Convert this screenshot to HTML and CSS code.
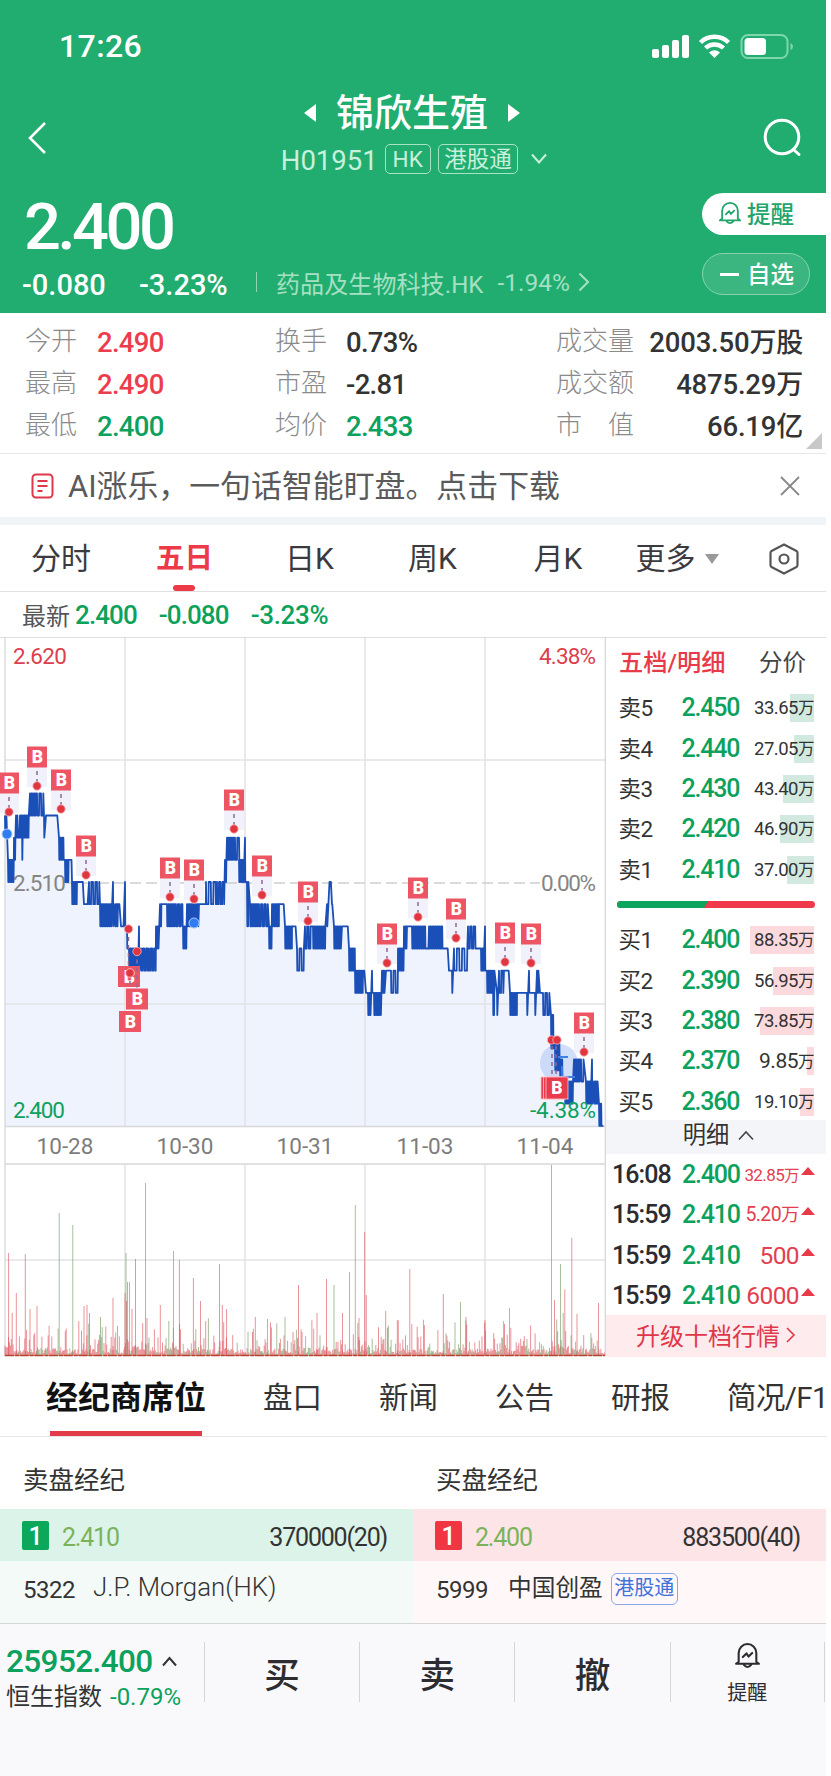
FILE: index.html
```html
<!DOCTYPE html>
<html lang="zh-CN">
<head>
    <meta charset="UTF-8">
    <meta name="viewport" content="width=device-width, initial-scale=1.0">
    <title>锦欣生殖 H01951</title>
    <link rel="stylesheet" href="styles.css">
</head>
<body>
    <svg width="0" height="0" class="defs">
        <symbol id="bell" viewBox="0 0 26 26">
            <path d="M4.500 19V10.500a8.500 8.500 0 0 1 17 0V19l2.500 2H2zM9.500 22q3.500 4 7 0M8.500 14.500l3.500-3.500 2 3 3.500-3.500" fill="none" stroke="currentColor" stroke-width="2" stroke-linejoin="round" stroke-linecap="round"/>
        </symbol>
    </svg>

    <header class="header">
        <div class="status-bar">
            <span class="clock">17:26</span>
            <svg width="144" height="26" viewBox="0 0 144 26" fill="#fff">
                <rect x="1" y="16" width="7" height="9" rx="2"/>
                <rect x="11" y="12" width="7" height="13" rx="2"/>
                <rect x="21" y="7" width="7" height="18" rx="2"/>
                <rect x="31" y="2" width="7" height="23" rx="2"/>
                <path d="M49.500 9.500a20 20 0 0 1 28 0M54.500 15a13 13 0 0 1 18 0" fill="none" stroke="#fff" stroke-width="4.500"/>
                <path d="M58 19.500q5.500-4.500 11 0L63.500 25z"/>
                <rect x="90.500" y="2" width="46" height="23" rx="6.500" fill="none" stroke="#7fd6ad" stroke-width="2"/>
                <rect x="93.500" y="5" width="21.500" height="17" rx="3.500"/>
                <path d="M139.500 10v7q2.500-1 2.500-3.500t-2.500-3.500z" fill="#7fd6ad"/>
            </svg>
        </div>

        <div class="title-bar">
            <svg class="back" width="20" height="34" viewBox="0 0 20 34"><path d="M18 2L3 17l15 15" fill="none" stroke="#fff" stroke-width="2.600"/></svg>
            <div class="title">
                <div class="title-name">
                    <svg width="12" height="18"><path d="M12 0v18L0 9z" fill="#fff"/></svg>
                    <h1>锦欣生殖</h1>
                    <svg width="12" height="18"><path d="M0 0v18l12-9z" fill="#fff"/></svg>
                </div>
                <div class="title-code">
                    <span class="code">H01951</span>
                    <span class="tag">HK</span>
                    <span class="tag">港股通</span>
                    <svg width="16" height="12"><path d="M1 1.500l7 8 7-8" fill="none" stroke="#c9f0dc" stroke-width="2"/></svg>
                </div>
            </div>
            <svg class="search" width="40" height="42" viewBox="0 0 40 42" fill="none" stroke="#fff" stroke-width="3" stroke-linecap="round"><circle cx="19" cy="19" r="16.800"/><path d="M30.500 31.500l5.500 5"/></svg>
        </div>

        <div class="quote">
            <div class="quote-left">
                <div class="price">2.400</div>
                <div class="change">
                    <span class="diff">-0.080</span>
                    <span class="pct">-3.23%</span>
                    <i class="sep"></i>
                    <span class="sector">药品及生物科技.HK</span>
                    <span class="sector-pct">-1.94%</span>
                    <svg width="12" height="20"><path d="M1.500 1.500l8.500 8.500-8.500 8.500" fill="none" stroke="#a5e0c3" stroke-width="2"/></svg>
                </div>
            </div>
            <div class="quote-actions">
                <button class="btn-remind"><svg width="24" height="24"><use href="#bell"/></svg>提醒</button>
                <button class="btn-watch"><i class="minus"></i>自选</button>
            </div>
        </div>
    </header>

    <section class="stats">
        <span class="label">今开</span><span class="value red">2.490</span>
        <span class="label">换手</span><span class="value">0.73%</span>
        <span class="label">成交量</span><span class="value right">2003.50<b>万股</b></span>
        <span class="label">最高</span><span class="value red">2.490</span>
        <span class="label">市盈</span><span class="value">-2.81</span>
        <span class="label">成交额</span><span class="value right">4875.29<b>万</b></span>
        <span class="label">最低</span><span class="value green">2.400</span>
        <span class="label">均价</span><span class="value green">2.433</span>
        <span class="label spread"><span>市</span><span>值</span></span><span class="value right">66.19<b>亿</b></span>
        <i class="corner"></i>
    </section>

    <section class="notice">
        <svg width="23" height="26" viewBox="0 0 23 26" fill="none" stroke="#e0384a" stroke-width="2"><rect x="1.500" y="1.500" width="20" height="23" rx="3.500"/><path d="M6.500 8h10M6.500 13h10M6.500 18h5"/></svg>
        <p>AI涨乐，一句话智能盯盘。点击下载</p>
        <svg width="20" height="20"><path d="M1 1l18 18M19 1L1 19" stroke="#888" stroke-width="1.800"/></svg>
    </section>

    <nav class="periods">
        <a>分时</a>
        <a class="active">五日</a>
        <a>日K</a>
        <a>周K</a>
        <a>月K</a>
        <a>更多<i class="caret"></i></a>
        <svg width="32" height="34" viewBox="0 0 32 34" fill="none" stroke="#555" stroke-width="2.200"><path d="M16 2.500l12.500 6.500q1 .5 1 2v12q0 1.500-1 2L16 31.500 3.500 25q-1-.5-1-2V11q0-1.500 1-2z"/><circle cx="16" cy="17" r="4.500"/></svg>
    </nav>

    <div class="latest">
        <span class="latest-label">最新</span><span>2.400</span><span>-0.080</span><span>-3.23%</span>
    </div>

    <main class="market">
        <svg class="chart" width="606" height="720" viewBox="0 637 606 720">
            <path id="area" fill="#eef3fd"/>
            <g fill="none" stroke="#e3e4e7" stroke-width="1.500">
                <path d="M125 638v488M245 638v488M365 638v488M485 638v488M5 760h600M5 1004h600"/>
                <path d="M125 1164v192M245 1164v192M365 1164v192M485 1164v192M5 1260h600"/>
            </g>
            <path d="M66 883H540" stroke="#cfcfcf" stroke-width="1.500" stroke-dasharray="11 5"/>
            <path d="M5 1126.500h600M5 1164h600M5 637v719M605.300 637v719" stroke="#d6d8db" stroke-width="1.300"/>
            <g class="axis">
                <text x="13" y="664" textLength="54" class="red">2.620</text>
                <text x="596" y="664" text-anchor="end" textLength="57" class="red">4.38%</text>
                <text x="13" y="891" textLength="53">2.510</text>
                <text x="596" y="891" text-anchor="end" textLength="55">0.00%</text>
            </g>
            <circle cx="559" cy="1063" r="19" fill="#b9cdf6" fill-opacity=".65"/>
            <path id="line" fill="none" stroke="#1a4fb8" stroke-width="1.800" stroke-linejoin="round"/>
            <path d="M558 1057h10M562 1066v11h13" fill="none" stroke="#3f7fe8" stroke-width="1.800"/>
            <g class="axis">
                <text x="13" y="1118" textLength="52" class="green">2.400</text>
                <text x="596" y="1118" text-anchor="end" textLength="66" class="green">-4.38%</text>
            </g>
            <g fill="#2f7df0" stroke="#a7c8fb"><circle cx="7" cy="834" r="5"/><circle cx="194" cy="923" r="5"/></g>
            <g id="markers"></g>
            <g class="dates">
                <text x="65" y="1154">10-28</text>
                <text x="185" y="1154">10-30</text>
                <text x="305" y="1154">10-31</text>
                <text x="425" y="1154">11-03</text>
                <text x="545" y="1154">11-04</text>
            </g>
            <g id="volume"></g>
        </svg>

        <aside class="book">
            <div class="book-tabs"><b>五档/明细</b><span>分价</span></div>
            <div class="levels" id="sells"></div>
            <svg class="ratio" width="198" height="7"><rect width="198" height="7" rx="3.500" fill="#f0394a"/><path d="M3.500 0H91l-4 7H3.500a3.500 3.500 0 0 1 0-7z" fill="#0da55d"/></svg>
            <div class="levels" id="buys"></div>
            <div class="detail-bar">明细<svg width="16" height="11"><path d="M1 9.500L8 2l7 7.500" fill="none" stroke="#444" stroke-width="1.600"/></svg></div>
            <div class="ticks">
                <div class="tick"><span>16:08</span><span class="green">2.400</span><span class="s">32.85<b>万</b></span><i></i></div>
                <div class="tick"><span>15:59</span><span class="green">2.410</span><span class="m">5.20<b>万</b></span><i></i></div>
                <div class="tick"><span>15:59</span><span class="green">2.410</span><span class="l">500</span><i></i></div>
                <div class="tick"><span>15:59</span><span class="green">2.410</span><span class="l">6000</span><i></i></div>
            </div>
            <div class="upgrade">升级十档行情<svg width="10" height="18"><path d="M1 2l7 7-7 7" fill="none" stroke="#e0384a" stroke-width="1.600"/></svg></div>
        </aside>
    </main>

    <nav class="sections">
        <a class="active">经纪商席位</a>
        <a>盘口</a>
        <a>新闻</a>
        <a>公告</a>
        <a>研报</a>
        <a>简况/F1</a>
    </nav>

    <section class="brokers">
        <div class="broker sell">
            <h2>卖盘经纪</h2>
            <div class="broker-head"><em>1</em><span class="broker-price">2.410</span><span>370000(20)</span></div>
            <div class="broker-row"><span class="num">5322</span><span class="name latin">J.P. Morgan(HK)</span></div>
        </div>
        <div class="broker buy">
            <h2>买盘经纪</h2>
            <div class="broker-head"><em>1</em><span class="broker-price">2.400</span><span>883500(40)</span></div>
            <div class="broker-row"><span class="num">5999</span><span class="name">中国创盈</span><span class="tag-blue">港股通</span></div>
        </div>
    </section>

    <footer class="toolbar">
        <div class="index">
            <div class="index-value">25952.400<svg width="15" height="11"><path d="M1 9.500L7.500 2 14 9.500" fill="none" stroke="#333" stroke-width="2"/></svg></div>
            <div class="index-name">恒生指数<span>-0.79%</span></div>
        </div>
        <button>买</button>
        <button>卖</button>
        <button>撤</button>
        <button class="remind"><svg width="27" height="27"><use href="#bell"/></svg>提醒</button>
    </footer>

    <script>
        const TOP = 882, STEP = 22.17, BOTTOM = 1126;

        // price runs: x from, x to, high level, low level, optional zigzag step.
        // a level is one 0.01 tick below 2.510
        const runs = [
            [5, 7, -3, -2], [8, 14, -1, 0], [14, 16, -2, -1], [16, 18, -3, -2], [18, 20, -2, -2],
            [20, 22, -3, -2], [22, 23, -3, -1], [23, 29, -3, -2], [30, 36, -4, -3], [37, 43, -4, -3, 2], [44, 45, -3, -2],
            [46, 58, -3, -3], [59, 64, -2, -1], [65, 69, -1, 0], [69, 72, -1, -1], [72, 77, 0, 1],
            [77, 83, 0, 0], [84, 88, 1, 1], [89, 99, 0, 1, 2], [100, 112, 1, 2], [113, 114, 0, 2], [115, 118, 1, 2],
            [118, 120, 1, 1], [121, 124, 2, 2], [125, 126, 0, 2], [127, 128, 2, 3], [129, 138, 3, 4], [139, 140, 2, 4],
            [141, 148, 3, 4, 1.6], [149, 156, 3, 4, 1.6], [156, 159, 2, 3], [160, 162, 1, 2], [162, 167, 1, 1],
            [167, 175, 1, 2], [176, 183, 1, 2, 1.6], [183, 187, 2, 3], [187, 199, 1, 2], [199, 206, 1, 1],
            [206, 216, 0, 1, 2.4], [217, 225, 0, 1, 1.7], [225, 227, -1, 0], [227, 234, -2, -1], [235, 239, -2, -1, 2],
            [239, 244, -1, 0], [245, 246, -2, 0], [247, 249, 0, 2], [250, 258, 1, 2], [259, 268, 1, 2, 1.7], [269, 272, 2, 3],
            [272, 279, 1, 2], [279, 284, 1, 1], [285, 292, 2, 3], [292, 296, 2, 2], [297, 304, 3, 4, 2.2], [305, 312, 2, 3, 1.8],
            [313, 326, 2, 3], [327, 328, 1, 2], [329.5, 331, 0, 0], [332, 333, 1, 1], [334, 341, 2, 3], [342, 348, 2, 2],
            [349, 355, 3, 4], [355, 363, 4, 5], [364, 365, 4, 4], [366, 368, 5, 5], [368, 371, 5, 6], [372, 373, 4, 5],
            [374, 381, 5, 6], [382, 385, 4, 5], [386, 390, 4, 4], [391, 398, 4, 5, 2.2], [398, 404, 3, 4], [404, 407, 2, 3],
            [407, 412, 2, 2], [412, 426, 2, 3], [427, 429, 3, 3], [429, 443, 2, 3], [443, 448, 3, 3], [449, 451, 4, 4],
            [452, 453, 4, 5], [454, 468, 3, 4, 2.6], [468, 476, 2, 3, 1.8], [477, 481, 3, 3], [481, 484, 3, 4], [485, 486, 2, 4],
            [487, 493, 4, 5], [493, 495, 4, 6], [497, 498, 5, 6], [499, 503, 4, 5, 2], [504, 509, 4, 4], [510, 517, 5, 6],
            [517, 526, 5, 5], [527, 528, 5, 6], [529, 530, 4, 5], [531, 534, 5, 5], [535, 536, 5, 6], [537, 539, 4, 5],
            [540, 543, 5, 5], [543, 550, 5, 6, 2], [551, 554, 6, 7.5], [555, 560, 7.3, 8.5], [560, 563, 8, 9],
            [565, 573, 9, 10], [574, 580, 8, 9], [581, 585, 8, 9, 2.2], [586, 591, 9, 10], [592, 593, 8, 10],
            [594, 598, 9, 10], [599, 602, 10, 11], [602, 604, 11, 11]
        ];
        const level = k => (TOP + k * STEP).toFixed(1);
        const points = [];
        runs.forEach(([from, to, hi, lo, step = 1.1]) => {
            let up = true;
            for (let x = from; x <= to; x += step) {
                points.push(x.toFixed(1) + ' ' + level(up ? hi : lo));
                points.push((x + 0.3).toFixed(1) + ' ' + level(up ? lo : hi));
                up = !up;
            }
        });
        document.getElementById('line').setAttribute('d', 'M' + points.join('L'));
        document.getElementById('area').setAttribute('d', 'M' + points.join('L') + 'V' + BOTTOM + 'H5Z');

        // buy markers, placed above their dots
        const above = [[9, 812], [37, 786], [61, 809], [86, 875], [170, 897], [194, 899], [234, 829], [262, 895], [308, 921],
            [387, 963], [418, 917], [456, 938], [505, 962], [531, 963], [584, 1052]];
        const dot = (x, y) => `<circle cx="${x}" cy="${y}" r="4.2" fill="#e0363f" stroke="#f9b8bf" stroke-width=".8"/>`;
        const box = (x, y, w = 20) => `<rect x="${x}" y="${y}" width="${w}" height="21" fill="#ee5564"/><text class="b" x="${x + w / 2 + .5}" y="${y + 16.500}">B</text>`;
        const dash = (x, y1, y2) => `<path d="M${x} ${y1}V${y2}" stroke="#8d6a96" stroke-width="1.5" stroke-dasharray="4 4"/>`;
        let marks = '';
        above.forEach(([x, y]) => {
            marks += `<rect x="${x - 10}" y="${y - 19}" width="20" height="20" fill="#f1f1fc"/>` +
                dash(x, y - 15, y - 3) + dot(x, y) + box(x - 10, y - 39.5);
        });
        // clusters hanging below the line
        [[128.5, 929, 118, 966], [130, 973, 119, 1011], [137, 951.5, 126, 988.5]].forEach(([x, y, bx, by]) => {
            marks += dash(x, y, by) + box(bx, by, 22) + dot(x, y);
        });
        marks += dot(130, 973);
        marks += dash(552, 1046, 1077) + dash(556, 1046, 1077);
        [541, 543.5, 546].forEach(x => { marks += `<rect x="${x}" y="1077" width="22" height="22" fill="#e83b4c" stroke="#fac5ca" stroke-width=".8"/>`; });
        marks += `<text class="b" x="557" y="1094">B</text>` + dot(551.5, 1040) + dot(557, 1040);
        document.getElementById('markers').innerHTML = marks;

        // volume bars: tall ones are listed, the floor is a seeded fill
        const tall = [[8.6, 103, 'r'], [16.3, 63, 'r'], [25.3, 102, 'r'], [30, 47, 'r'], [37, 50, 'r'], [59.2, 143, 'g'], [72.8, 131, 'g'],
            [84, 50, 'r'], [87, 51, 'r'], [89.5, 43, 'r'], [100.5, 39, 'g'], [113, 58, 'r'], [125, 63, 'r'], [126, 103, 'g'], [127.5, 74, 'g'],
            [129.5, 74, 'g'], [132, 47, 'r'], [135.5, 97, 'r'], [145.5, 173, 'g'], [147, 38, 'r'], [160.3, 51, 'r'], [173.5, 105, 'g'],
            [179.4, 96, 'r'], [193.4, 78, 'r'], [200.5, 55, 'r'], [219.5, 92, 'r'], [222.3, 51, 'r'], [226.6, 47, 'r'], [255.3, 39, 'r'],
            [267.5, 37, 'g'], [285, 39, 'g'], [298.5, 71, 'r'], [317, 43, 'r'], [326.5, 77, 'r'], [334, 71, 'g'], [342.5, 43, 'r'],
            [349.5, 84, 'g'], [355.3, 151, 'g'], [359, 38, 'r'], [364.7, 124, 'r'], [366.3, 61, 'r'], [385.7, 45, 'r'], [397.3, 36, 'r'],
            [409.8, 87, 'r'], [443.3, 62, 'r'], [460.5, 54, 'g'], [466, 39, 'r'], [485, 36, 'r'], [509.5, 48, 'g'], [551.5, 191, 'g'],
            [554.5, 56, 'r'], [560.5, 92, 'g'], [563.2, 43, 'g'], [571.8, 118, 'r'], [577, 42, 'r'], [598.5, 53, 'r']];
        const color = { r: '#dc4a54', g: '#6b9458' };
        const bar = (x, h, c, o) => `<path d="M${x} 1356v-${h}" stroke="${color[c]}" stroke-opacity="${o}" stroke-width=".8"/>`;
        let seed = 7;
        const rnd = () => (seed = (seed * 16807) % 2147483647) / 2147483647;
        let bars = '';
        for (let x = 5; x < 605; x += 0.9) {
            const busy = (x < 16 || (x > 124 && x < 140) || (x > 550 && x < 566)) ? 1.8 : 1;
            const h = 2 + Math.pow(rnd(), 7) * 34 * busy + rnd() * 5 * busy;
            bars += bar(x.toFixed(1), h.toFixed(1), rnd() > 0.27 ? 'r' : 'g', 0.75);
        }
        tall.forEach(([x, h, c]) => { bars += bar(x, h, c, 0.75); });
        bars += '<path d="M5 1355.5h600" stroke="#b5442f" stroke-width="1.6" stroke-dasharray="9 1 4 .7"/>';
        document.getElementById('volume').innerHTML = bars;

        // order book
        const sells = [['卖5', '2.450', 33.65], ['卖4', '2.440', 27.05], ['卖3', '2.430', 43.40], ['卖2', '2.420', 46.90], ['卖1', '2.410', 37.00]];
        const buys = [['买1', '2.400', 88.35], ['买2', '2.390', 56.95], ['买3', '2.380', 73.85], ['买4', '2.370', 9.85], ['买5', '2.360', 19.10]];
        const rows = list => list.map(([name, price, vol]) =>
            `<div class="level"><span>${name}</span><span class="green">${price}</span>` +
            `<span class="vol${vol < 10 ? ' big' : ''}"><i style="width:${(vol * 0.725).toFixed(0)}px"></i><em>${vol.toFixed(2)}<b>万</b></em></span></div>`).join('');
        document.getElementById('sells').innerHTML = rows(sells);
        document.getElementById('buys').innerHTML = rows(buys);
    </script>
</body>
</html>
```
FILE: styles.css
```css
* {
    box-sizing: border-box;
}

html {
    background: #fff;
}

body {
    margin: 0;
    width: 826px;
    height: 1776px;
    overflow: hidden;
    background: #fff;
    color: #333;
    font-family: Roboto, "Noto Sans CJK SC", sans-serif;
    display: flex;
    flex-direction: column;
}

body > * {
    flex-shrink: 0;
}

svg {
    display: block;
    flex-shrink: 0;
}

.defs {
    height: 0;
    flex: none;
}

i, em {
    font-style: normal;
}

button {
    border: none;
    background: none;
    padding: 0;
    font-family: inherit;
}

.red {
    color: #ec3d4e;
    fill: #dc3f4e;
}

.green {
    color: #0ca15c;
    fill: #0fa15e;
}

/* header */
.header {
    height: 313px;
    background: #21ad70;
    color: #fff;
}

.status-bar {
    height: 92px;
    padding: 0 31px 0 59px;
    display: flex;
    justify-content: space-between;
    align-items: center;
}

.clock {
    font-size: 32px;
    font-weight: 500;
    letter-spacing: 0.4px;
}

.title-bar {
    height: 92px;
    padding: 0 23px 0 27px;
    display: flex;
    justify-content: space-between;
    align-items: flex-start;
}

.back {
    margin-top: 29px;
}

.search {
    margin-top: 26px;
}

.title {
    padding-left: 18px;
}

.title-name {
    display: flex;
    justify-content: center;
    align-items: center;
    gap: 20px;
    height: 42px;
    margin-right: 4px;
}

.title-name h1 {
    margin: 0;
    font-size: 38px;
    line-height: 42px;
    font-weight: 500;
}

.title-code {
    height: 30px;
    margin-top: 10px;
    display: flex;
    align-items: center;
    gap: 7px;
    color: #c9f0dc;
}

.code {
    font-size: 27.5px;
    line-height: 30px;
    padding-top: 3px;
}

.tag {
    height: 30px;
    padding: 0 5.5px;
    min-width: 46px;
    border: 1.5px solid #a9e3c6;
    border-radius: 5px;
    font-size: 22.5px;
    line-height: 28px;
    text-align: center;
}

.title-code svg {
    margin-left: 6px;
}

.quote {
    display: flex;
    justify-content: space-between;
    height: 129px;
}

.quote-left {
    padding-left: 24px;
}

.price {
    font-size: 65px;
    line-height: 64px;
    font-weight: 500;
    font-stretch: 88%;
    letter-spacing: -3.5px;
    padding-top: 11px;
}

.change {
    display: flex;
    align-items: center;
    height: 34px;
    margin-top: 6px;
    margin-left: -2px;
    font-size: 29px;
    font-weight: 500;
    white-space: nowrap;
}

.diff {
    width: 117px;
}

.pct {
    width: 117px;
}

.diff, .pct {
    padding-top: 5px;
}

.sep {
    width: 1px;
    height: 20px;
    margin-right: 19px;
    background: #8fd6b4;
}

.sector, .sector-pct {
    color: #a5e0c3;
    font-size: 24px;
    font-weight: 400;
}

.sector {
    letter-spacing: 0.1px;
}

.sector-pct {
    font-size: 24.5px;
    margin: 1px 8px 0 14px;
}

.quote-actions {
    padding-top: 9px;
    width: 124px;
}

.btn-remind, .btn-watch {
    display: flex;
    align-items: center;
    height: 42px;
    padding-bottom: 2px;
    font-size: 23.5px;
    font-weight: 500;
}

.btn-remind {
    width: 124px;
    padding-left: 16px;
    gap: 5px;
    border-radius: 21px 0 0 21px;
    background: #fff;
    color: #21a56c;
}

.btn-watch {
    width: 108px;
    margin-top: 18px;
    padding-left: 17px;
    gap: 8px;
    border: 1.5px solid #85d3ae;
    border-radius: 21px;
    background: #3bb680;
    color: #fff;
}

.minus {
    width: 19px;
    height: 3px;
    margin-top: 2px;
    background: #fff;
}

/* key numbers */
.stats {
    position: relative;
    height: 141px;
    padding: 8px 23px 0 25px;
    border-bottom: 1px solid #e6e7e9;
    display: grid;
    grid-template-columns: 72px 178px 71px 210px 78px 1fr;
    grid-auto-rows: 42px;
    white-space: nowrap;
}

.label {
    font-size: 26px;
    line-height: 40px;
    color: #8a8a8a;
    font-weight: 300;
}

.spread {
    display: flex;
    justify-content: space-between;
}

.value {
    font-size: 27.5px;
    line-height: 43px;
    font-weight: 500;
    letter-spacing: -0.7px;
}

.right {
    text-align: right;
    letter-spacing: -0.2px;
}

.value b {
    font-size: 27px;
    font-weight: 500;
}

.corner {
    position: absolute;
    right: 4px;
    bottom: 4px;
    border-left: 16px solid transparent;
    border-bottom: 16px solid #c8c8c8;
}

.notice {
    height: 63px;
    padding: 0 26px 0 31px;
    display: flex;
    align-items: center;
}

.notice p {
    flex: 1;
    margin: 2px 0 0 14px;
    font-size: 30.9px;
    line-height: 40px;
    color: #5a5a5a;
}

/* chart tabs */
.periods {
    height: 75px;
    border-top: 8px solid #f0f4f6;
    border-bottom: 1px solid #dfe1e3;
    padding: 1px 26px 0 31px;
    display: grid;
    grid-template-columns: 125px 129px 123px 125.5px 102px 1fr 32px;
    align-items: center;
    font-size: 30px;
    color: #3b3b3f;
}

.periods a {
    position: relative;
    line-height: 65px;
    display: flex;
    align-items: center;
}

.periods .active {
    color: #ec3a49;
    font-weight: 700;
    font-size: 28.5px;
}

.periods .active::after {
    content: "";
    position: absolute;
    left: 17px;
    bottom: 0;
    width: 22px;
    height: 6px;
    border-radius: 3px;
    background: #ec3a49;
}

.caret {
    margin-left: 9px;
    border: 7.5px solid transparent;
    border-top: 10px solid #999;
    border-bottom: 0;
}

.latest {
    height: 45px;
    padding-left: 22px;
    display: flex;
    align-items: center;
    font-size: 26px;
    font-weight: 500;
    letter-spacing: -0.9px;
    color: #0ca15c;
}

.latest span + span {
    margin-right: 22px;
}

.latest span:last-child {
    letter-spacing: -0.3px;
}

.latest .latest-label {
    margin-right: 5px;
    font-size: 24px;
    font-weight: 400;
    color: #555;
    letter-spacing: 0;
}

/* chart and order book */
.market {
    display: flex;
    height: 720px;
    border-top: 1px solid #dcdee0;
}

.axis text {
    font-size: 22.5px;
}

.axis text:not([class]) {
    fill: #858585;
}

.dates text {
    font-size: 22.5px;
    fill: #7d7d7d;
    text-anchor: middle;
}

.b {
    font-size: 17.5px;
    font-weight: 900;
    fill: #fff;
    text-anchor: middle;
}

.chart {
    margin-top: -1px;
}

.book {
    width: 220px;
    font-size: 25px;
}

.book-tabs {
    height: 50px;
    padding: 0 20px 5px 13px;
    display: flex;
    align-items: center;
    justify-content: space-between;
    font-size: 23.5px;
    color: #444;
}

.book-tabs b {
    color: #e83b4a;
    font-weight: 500;
    font-size: 24.3px;
}

.level {
    height: 40.4px;
    padding: 0 12px 0 12.5px;
    display: grid;
    grid-template-columns: 63px 60px 1fr;
    align-items: center;
    line-height: 40px;
    font-size: 22.5px;
    letter-spacing: -0.5px;
}

.level .green, .tick .green {
    font-size: 25px;
    font-weight: 500;
    letter-spacing: -1.2px;
    white-space: nowrap;
}

.vol {
    position: relative;
    height: 28px;
    display: flex;
    justify-content: flex-end;
    font-size: 18.5px;
    line-height: 29px;
}

.vol i {
    height: 28px;
    background: #d1e9de;
}

#buys .vol i {
    background: #fcd9dc;
}

.vol em {
    position: absolute;
    right: 0;
}

.vol b, .tick b {
    font-weight: 400;
    font-size: 16.5px;
}

.big {
    font-size: 21px;
}

.ratio {
    margin: 11px 0 12px 11px;
}

.detail-bar {
    height: 34px;
    margin-top: -2px;
    padding-left: 5px;
    display: flex;
    align-items: center;
    justify-content: center;
    gap: 9px;
    background: #f3f5f9;
    font-size: 23.3px;
    line-height: 30px;
    padding-bottom: 3px;
}

.ticks {
    height: 161px;
}

.tick {
    height: 40.4px;
    padding: 0 11px 0 6px;
    display: grid;
    grid-template-columns: 70px 57px 1fr 16px;
    line-height: 42px;
    font-weight: 500;
    letter-spacing: -0.9px;
    white-space: nowrap;
    color: #2c2c30;
}

.tick .s, .tick .m, .tick .l {
    color: #e2404f;
    text-align: right;
    font-weight: 400;
    font-size: 17px;
    letter-spacing: -0.6px;
}

.tick .s b {
    font-size: 15.5px;
}

.tick .m {
    font-size: 19.5px;
}

.tick .m b {
    font-size: 18.5px;
}

.tick .l {
    font-size: 24.5px;
}

.tick i {
    align-self: start;
    justify-self: end;
    margin-top: 13px;
    border: 7px solid transparent;
    border-bottom: 8px solid #e83a49;
    border-top: 0;
}

.upgrade {
    height: 42px;
    padding-bottom: 2px;
    display: flex;
    align-items: center;
    justify-content: center;
    gap: 6px;
    background: #feebed;
    color: #e0384a;
    font-size: 24px;
}

/* lower tabs */
.sections {
    height: 80px;
    padding-left: 46px;
    border-bottom: 1px solid #e4e6e8;
    display: flex;
    overflow: hidden;
    white-space: nowrap;
    font-size: 29.5px;
    line-height: 82px;
    color: #333;
}

.sections a {
    width: 116px;
    flex-shrink: 0;
}

.sections a:last-child {
    width: auto;
    letter-spacing: -0.6px;
}

.sections .active {
    position: relative;
    width: 217px;
    font-size: 32px;
    font-weight: 700;
    color: #111;
}

.sections .active::after {
    content: "";
    position: absolute;
    left: 4px;
    bottom: 0;
    width: 152px;
    height: 5px;
    background: #e33c49;
}

.brokers {
    height: 187px;
    display: flex;
    border-bottom: 1px solid #d4d6da;
}

.broker {
    flex: 1;
}

.broker h2 {
    margin: 0;
    padding: 7px 0 0 23px;
    height: 72px;
    line-height: 72px;
    font-size: 25.5px;
    font-weight: 400;
}

.broker-head {
    height: 52px;
    padding: 4px 26px 0 22px;
    display: flex;
    align-items: center;
    background: #dcf3e9;
    font-size: 25px;
}

.buy .broker-head {
    background: #fde5e7;
}

.broker-head em {
    width: 27px;
    height: 29px;
    margin: -3px 13px 0 0;
    border-radius: 2px;
    background: #0ba75a;
    color: #fff;
    text-align: center;
    line-height: 31px;
    font-weight: 500;
}

.buy em {
    background: #ef3642;
}

.broker-head span {
    letter-spacing: -1.2px;
}

.broker-row {
    height: 62px;
    padding: 0 23px 10px;
    display: flex;
    align-items: center;
    background: #f4faf8;
    font-size: 24px;
}

.broker-head .broker-price {
    flex: 1;
    color: #7bb35b;
}

.buy .broker-row {
    background: #fff7f8;
}

.num {
    width: 72px;
    padding-top: 6px;
    letter-spacing: -0.5px;
}

.name {
    margin-top: -3px;
    font-size: 23.7px;
}

.latin {
    margin: -1px 0 0 -2px;
    font-size: 25.8px;
    font-weight: 300;
}

.tag-blue {
    height: 32px;
    margin: 3px 0 0 8px;
    padding: 0 2.5px;
    border: 1.5px solid #8aa8e8;
    border-radius: 6px;
    color: #4173dc;
    font-size: 20px;
    line-height: 29px;
}

/* bottom toolbar */
.toolbar {
    flex: 1;
    padding-top: 18px;
    background: #f9f9fb;
    display: grid;
    grid-template-columns: 204px repeat(4, 155.2px);
    grid-template-rows: 60px;
    overflow: hidden;
}

.index {
    padding-left: 6px;
    white-space: nowrap;
}

.index-value {
    display: flex;
    align-items: center;
    gap: 9px;
    height: 38px;
    color: #0ca15c;
    font-size: 31.5px;
    font-weight: 500;
    letter-spacing: -0.6px;
}

.index-name {
    height: 34px;
    line-height: 34px;
    font-size: 24px;
}

.index-name span {
    margin-left: 8px;
    color: #0ca15c;
}

.toolbar button {
    border-left: 1px solid #d3d5d9;
    color: #2d2d31;
    font-size: 35.5px;
    font-weight: 500;
}

.toolbar .remind {
    border-right: 1px solid #d3d5d9;
    display: flex;
    flex-direction: column;
    align-items: center;
    font-size: 20px;
    line-height: 32px;
    gap: 8px;
    font-weight: 400;
}
```
